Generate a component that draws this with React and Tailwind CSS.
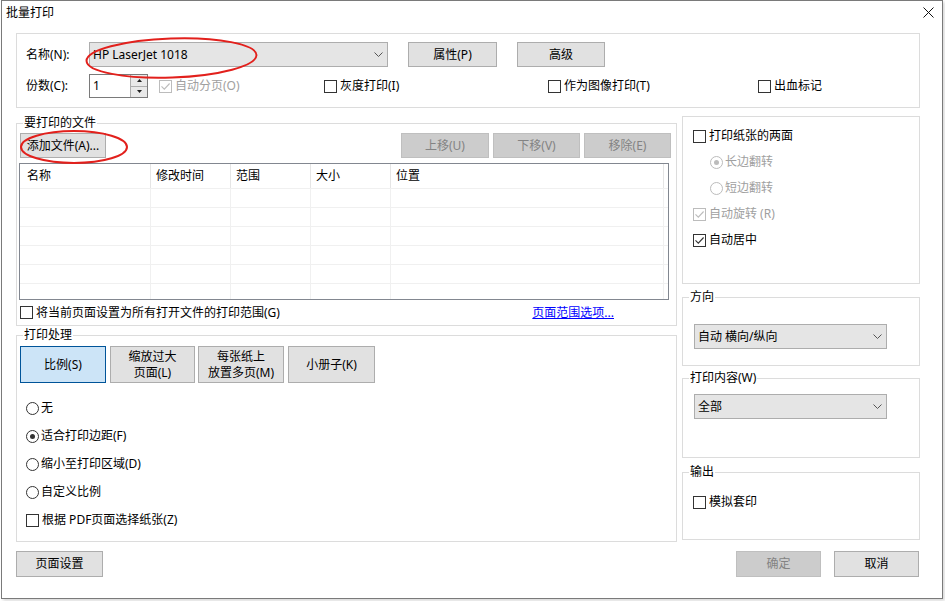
import React from 'react';

const Check = ({ checked = false, disabled = false }) => (
  <span
    className={`w-[13px] h-[13px] border bg-white flex items-center justify-center shrink-0 ${
      disabled ? 'border-[#bcbcbc]' : 'border-[#333333]'
    }`}
  >
    {checked && (
      <svg width="11" height="11" viewBox="0 0 11 11">
        <path d="M1.5 5.3l2.8 2.8 5.3-5.6" fill="none" stroke={disabled ? '#bcbcbc' : '#333333'} strokeWidth="1.1" />
      </svg>
    )}
  </span>
);

const Radio = ({ checked = false, disabled = false }) => (
  <span
    className={`w-[13px] h-[13px] rounded-full border bg-white flex items-center justify-center shrink-0 ${
      disabled ? 'border-[#bcbcbc]' : 'border-[#333333]'
    }`}
  >
    {checked && <span className={`w-[5px] h-[5px] rounded-full ${disabled ? 'bg-[#bcbcbc]' : 'bg-[#333333]'}`} />}
  </span>
);

const CheckRow = ({ label, checked, disabled, className = '' }) => (
  <div className={`flex items-center ${className}`}>
    <Check checked={checked} disabled={disabled} />
    <span className={`ml-[3px] ${disabled ? 'text-[#a0a0a0]' : 'text-black'}`}>{label}</span>
  </div>
);

const RadioRow = ({ label, checked, disabled, className = '' }) => (
  <div className={`flex items-center ${className}`}>
    <Radio checked={checked} disabled={disabled} />
    <span className={`ml-[2px] ${disabled ? 'text-[#a0a0a0]' : 'text-black'}`}>{label}</span>
  </div>
);

const Chevron = () => (
  <svg width="9" height="5" viewBox="0 0 9 5" className="shrink-0">
    <path d="M0.5 0.5l4 4 4-4" fill="none" stroke="#555555" strokeWidth="1" />
  </svg>
);

const Combo = ({ text, className = '' }) => (
  <div className={`h-[25px] bg-[#e5e5e5] border border-[#adadad] flex items-center pl-[3px] pr-[4px] ${className}`}>
    <span className="flex-1">{text}</span>
    <Chevron />
  </div>
);

const Btn = ({ children, className = '', disabled = false, selected = false }) => {
  let tone = 'bg-[#e1e1e1] border-[#adadad] text-black';
  if (disabled) tone = 'bg-[#cccccc] border-[#bfbfbf] text-[#838383]';
  if (selected) tone = 'bg-[#cce4f7] border-[#005499] text-black';
  return (
    <div className={`border flex items-center justify-center text-center leading-[16px] shrink-0 ${tone} ${className}`}>
      {children}
    </div>
  );
};

const Group = ({ title, children, className = '' }) => (
  <fieldset className={`border border-[#dcdcdc] ${className}`}>
    <legend className="ml-[6px] px-[1px] leading-[16px]">{title}</legend>
    {children}
  </fieldset>
);

const cols = [
  { name: '名称', w: 'w-[131px]', pl: 'pl-[7px]' },
  { name: '修改时间', w: 'w-[80px]', pl: 'pl-[5px]' },
  { name: '范围', w: 'w-[80px]', pl: 'pl-[5px]' },
  { name: '大小', w: 'w-[80px]', pl: 'pl-[5px]' },
  { name: '位置', w: 'w-[273px]', pl: 'pl-[5px]' },
];

const FileTable = () => (
  <div className="mt-[5px] ml-[2px] w-[650px] h-[137px] border border-[#828790] overflow-hidden">
    <div className="flex h-[25px] border-b border-[#f0f0f0]">
      {cols.map((c) => (
        <div key={c.name} className={`${c.w} ${c.pl} h-full flex items-center border-r border-[#e5e5e5]`}>
          {c.name}
        </div>
      ))}
      <div className="flex-1" />
    </div>
    {[0, 1, 2, 3, 4, 5].map((r) => (
      <div key={r} className="flex h-[19px] border-b border-[#f0f0f0]">
        {cols.map((c) => (
          <div key={c.name} className={`${c.w} h-full border-r border-[#f0f0f0]`} />
        ))}
        <div className="flex-1" />
      </div>
    ))}
  </div>
);

const Spinner = () => (
  <div className="w-[59px] h-[24px] border border-[#7a7a7a] bg-white flex">
    <div className="flex-1 pl-[3px] flex items-center">1</div>
    <div className="w-[17px] flex flex-col border-l border-[#adadad]">
      <div className="flex-1 bg-[#e9e9e9] border-b border-[#adadad] flex items-center justify-center">
        <svg width="5" height="3" viewBox="0 0 5 3"><path d="M0 3h5L2.5 0z" fill="#222" /></svg>
      </div>
      <div className="flex-1 bg-[#e9e9e9] flex items-center justify-center">
        <svg width="5" height="3" viewBox="0 0 5 3"><path d="M0 0h5L2.5 3z" fill="#222" /></svg>
      </div>
    </div>
  </div>
);

export default function App() {
  return (
    <div className="relative w-[945px] h-[601px] bg-white text-[12px] text-black font-['Noto_Sans','Noto_Sans_CJK_SC',sans-serif]">
      <div className="ml-[1px] w-[942px] h-[599px] border border-[#7a7a7a] bg-white shadow-[2px_2px_3px_rgba(0,0,0,0.15)]">
        {/* title bar */}
        <div className="h-[23px] flex items-center justify-between pl-[4px] pr-[8px]">
          <span className="leading-[16px]">批量打印</span>
          <svg width="11" height="11" viewBox="0 0 11 11">
            <path d="M0.5 0.5l10 10M10.5 0.5l-10 10" stroke="#111" strokeWidth="1" />
          </svg>
        </div>

        <div className="pl-[14px] pr-[22px]">
          {/* printer group */}
          <div className="mt-[9px] h-[75px] border border-[#dcdcdc] pl-[9px]">
            <div className="mt-[8px] flex items-center h-[25px]">
              <span className="w-[63px]">名称(N):</span>
              <Combo text="HP LaserJet 1018" className="w-[299px]" />
              <Btn className="ml-[20px] w-[89px] h-[25px]">属性(P)</Btn>
              <Btn className="ml-[20px] w-[88px] h-[25px]">高级</Btn>
            </div>
            <div className="mt-[7px] flex items-center h-[24px]">
              <span className="w-[63px]">份数(C):</span>
              <Spinner />
              <CheckRow className="ml-[11px] w-[165px]" label="自动分页(O)" checked disabled />
              <CheckRow className="w-[224px]" label="灰度打印(I)" />
              <CheckRow className="w-[210px]" label="作为图像打印(T)" />
              <CheckRow label="出血标记" />
            </div>
          </div>

          {/* middle */}
          <div className="mt-[7px] flex items-start gap-[5px]">
            <div className="w-[661px] flex flex-col">
              <Group title="要打印的文件">
                <div className="pt-[2px] pl-[3px] pr-[5px] flex h-[27px] items-end">
                  <Btn className="w-[86px] h-[25px]">添加文件(A)...</Btn>
                  <div className="ml-auto flex gap-[4px]">
                    <Btn disabled className="w-[88px] h-[25px]">上移(U)</Btn>
                    <Btn disabled className="w-[87px] h-[25px]">下移(V)</Btn>
                    <Btn disabled className="w-[87px] h-[25px]">移除(E)</Btn>
                  </div>
                </div>
                <FileTable />
                <div className="h-[25px] flex items-center pl-[3px] pr-[62px]">
                  <CheckRow label="将当前页面设置为所有打开文件的打印范围(G)" />
                  <span className="ml-auto text-[#0000ff] underline">页面范围选项...</span>
                </div>
              </Group>

              <Group title="打印处理" className="mt-[1px]">
                <div className="pt-[3px] pl-[3px] flex">
                  <Btn selected className="w-[86px] h-[37px]">比例(S)</Btn>
                  <Btn className="ml-[4px] w-[85px] h-[37px]">缩放过大<br />页面(L)</Btn>
                  <Btn className="ml-[3px] w-[86px] h-[37px]">每张纸上<br />放置多页(M)</Btn>
                  <Btn className="ml-[4px] w-[87px] h-[37px]">小册子(K)</Btn>
                </div>
                <div className="mt-[11px] pl-[9px] pb-[7px] flex flex-col">
                  <RadioRow className="h-[28px]" label="无" />
                  <RadioRow className="h-[28px]" label="适合打印边距(F)" checked />
                  <RadioRow className="h-[28px]" label="缩小至打印区域(D)" />
                  <RadioRow className="h-[28px]" label="自定义比例" />
                  <CheckRow className="h-[28px]" label="根据 PDF页面选择纸张(Z)" />
                </div>
              </Group>
            </div>

            <div className="w-[238px] mt-[1px] flex flex-col">
              <div className="h-[168px] border border-[#dcdcdc] pt-[6px] pl-[10px]">
                <CheckRow className="h-[26px]" label="打印纸张的两面" />
                <RadioRow className="h-[26px] pl-[17px]" label="长边翻转" checked disabled />
                <RadioRow className="h-[26px] pl-[17px]" label="短边翻转" disabled />
                <CheckRow className="h-[26px]" label="自动旋转 (R)" checked disabled />
                <CheckRow className="h-[26px]" label="自动居中" checked />
              </div>
              <Group title="方向" className="mt-[5px]">
                <div className="pt-[19px] pb-[16px] pl-[11px]">
                  <Combo text="自动 横向/纵向" className="w-[193px]" />
                </div>
              </Group>
              <Group title="打印内容(W)" className="mt-[4px]">
                <div className="pt-[8px] pb-[38px] pl-[11px]">
                  <Combo text="全部" className="w-[193px]" />
                </div>
              </Group>
              <Group title="输出" className="mt-[6px]">
                <div className="pt-[10px] pb-[25px] pl-[10px]">
                  <CheckRow className="h-[24px]" label="模拟套印" />
                </div>
              </Group>
            </div>
          </div>

          {/* bottom buttons */}
          <div className="mt-[9px] flex items-start">
            <Btn className="w-[87px] h-[26px]">页面设置</Btn>
            <Btn disabled className="ml-auto w-[85px] h-[26px]">确定</Btn>
            <Btn className="ml-[13px] mr-[1px] w-[85px] h-[26px]">取消</Btn>
          </div>
        </div>
      </div>

      {/* red annotation marks */}
      <svg className="absolute left-0 top-0 pointer-events-none" width="945" height="601">
        <ellipse cx="171.5" cy="58" rx="85" ry="19.5" transform="rotate(-2 171.5 58)" fill="none" stroke="#e2201c" strokeWidth="2" />
        <ellipse cx="74" cy="147" rx="53" ry="16" fill="none" stroke="#e2201c" strokeWidth="2" />
      </svg>
    </div>
  );
}
